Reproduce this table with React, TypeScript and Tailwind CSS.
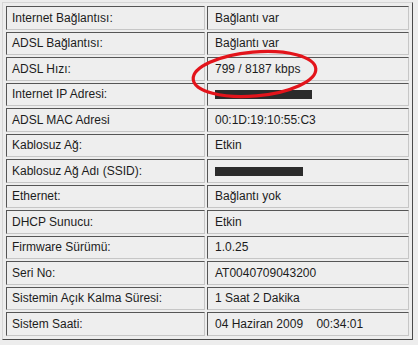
import React from 'react';

type Row = { label: string; value?: string; masked?: number };

const rows: Row[] = [
    { label: 'Internet Bağlantısı:', value: 'Bağlantı var' },
    { label: 'ADSL Bağlantısı:', value: 'Bağlantı var' },
    { label: 'ADSL Hızı:', value: '799 / 8187 kbps' },
    { label: 'Internet IP Adresi:', masked: 97 },
    { label: 'ADSL MAC Adresi', value: '00:1D:19:10:55:C3' },
    { label: 'Kablosuz Ağ:', value: 'Etkin' },
    { label: 'Kablosuz Ağ Adı (SSID):', masked: 88 },
    { label: 'Ethernet:', value: 'Bağlantı yok' },
    { label: 'DHCP Sunucu:', value: 'Etkin' },
    { label: 'Firmware Sürümü:', value: '1.0.25' },
    { label: 'Seri No:', value: 'AT0040709043200' },
    { label: 'Sistemin Açık Kalma Süresi:', value: '1 Saat 2 Dakika' },
    { label: 'Sistem Saati:', value: '04 Haziran 2009\u00a0\u00a0\u00a0\u00a000:34:01' },
];

const cell =
    'h-[23.5px] border border-t-[#555555] border-l-[#555555] border-r-[#c6c6c6] border-b-[#c6c6c6] bg-[#eeeeee] align-middle leading-none';

export default function App(): JSX.Element {
    return (
        <div className="relative min-h-screen bg-[#ededed] pl-[2px] pt-[2px] font-['Liberation_Sans',Arial,sans-serif] text-[12px] text-[#1c1c1c]">
            <table className="w-[411px] table-fixed border-separate border-spacing-[2px] border border-t-[#d6d6d6] border-l-[#d6d6d6] border-r-[#4a4a4a] border-b-[#4a4a4a] p-[1px]">
                <tbody>
                    {rows.map((r) => (
                        <tr key={r.label}>
                            <td className={`${cell} w-[199px] pl-[5px]`}>{r.label}</td>
                            <td className={`${cell} pl-[7px]`}>
                                {r.masked ? (
                                    <div className="mt-[1px] h-[9px] bg-[#2b2b2b]" style={{ width: r.masked }} />
                                ) : (
                                    r.value
                                )}
                            </td>
                        </tr>
                    ))}
                </tbody>
            </table>

            {/* red marker ring round the line speed */}
            <svg className="pointer-events-none absolute left-0 top-0" width="418" height="345">
                <ellipse
                    cx="254.5"
                    cy="74"
                    rx="61.5"
                    ry="22"
                    transform="rotate(-5 254.5 74)"
                    fill="none"
                    stroke="#e3141b"
                    strokeWidth="3.2"
                />
            </svg>
        </div>
    );
}
